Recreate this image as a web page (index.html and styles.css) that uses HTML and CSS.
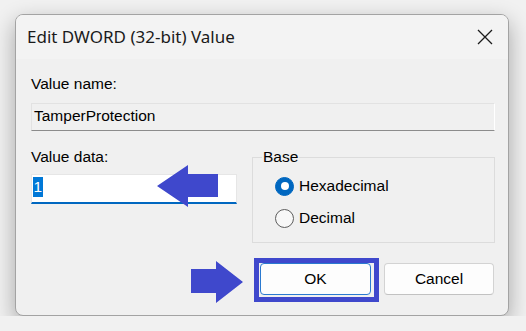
FILE: index.html
```html
<!DOCTYPE html>
<html>
<head>
    <title>Edit DWORD (32-bit) Value</title>
    <link rel="stylesheet" href="styles.css">
</head>
<body>
    <div class="dialog">
        <div class="title-bar">
            <span class="title">Edit DWORD (32-bit) Value</span>
            <span class="close-btn">
                <svg width="16" height="16" viewBox="0 0 16 16">
                    <path d="M1 1 L15 15 M15 1 L1 15" stroke="#1b1b1b" stroke-width="1.3" fill="none"/>
                </svg>
            </span>
        </div>
        <div class="dialog-body">
            <div class="field-label">Value name:</div>
            <div class="name-box">TamperProtection</div>
            <div class="data-row">
                <div class="data-col">
                    <div class="field-label">Value data:</div>
                    <div class="data-box">
                        <span class="selected-text">1</span>
                        <svg class="arrow arrow-left" width="61" height="42" viewBox="0 0 61 42">
                            <polygon points="0,21 31,0 31,9 61,9 61,32 31,32 31,42" fill="#3f48cc"/>
                        </svg>
                    </div>
                </div>
                <fieldset class="base-group">
                    <legend>Base</legend>
                    <div class="radio-row">
                        <span class="radio checked"></span>
                        <span>Hexadecimal</span>
                    </div>
                    <div class="radio-row">
                        <span class="radio"></span>
                        <span>Decimal</span>
                    </div>
                </fieldset>
            </div>
            <div class="button-row">
                <div class="ok-wrap">
                    <svg class="arrow arrow-right" width="52" height="42" viewBox="0 0 52 42">
                        <polygon points="0,8 25,8 25,0 52,21 25,42 25,32 0,32" fill="#3f48cc"/>
                    </svg>
                    <button class="btn btn-ok">OK</button>
                </div>
                <button class="btn">Cancel</button>
            </div>
        </div>
    </div>
</body>
</html>
```

FILE: styles.css
```css
* {
    margin: 0;
    padding: 0;
    box-sizing: border-box;
}
body {
    background: #f1f1f1;
    font-family: 'Liberation Sans', Arial, sans-serif;
    font-size: 15.5px;
    color: #000;
    overflow: hidden;
}
.dialog {
    margin: 14px 0 0 15px;
    width: 494px;
    background: #f0f0f0;
    border: 1px solid #a3a3a3;
    border-radius: 8px;
    box-shadow: 0 8px 22px rgba(0, 0, 0, 0.32);
    overflow: hidden;
}
.title-bar {
    height: 44px;
    background: #f3f3f3;
    display: flex;
    align-items: center;
    justify-content: space-between;
    padding: 0 15px 0 11px;
}
.title {
    font-family: 'Noto Sans', sans-serif;
    font-size: 17px;
    color: #1a1a1a;
    padding-bottom: 1px;
}
.close-btn {
    display: flex;
}
.dialog-body {
    padding: 16px 13px 20px 15px;
}
.field-label {
    line-height: 18px;
}
.name-box {
    margin-top: 10px;
    height: 28px;
    line-height: 18px;
    padding: 3px 2px 5px;
    border-top: 1px solid #e2e2e2;
    border-left: 1px solid #e2e2e2;
    border-right: 1px solid #ffffff;
    border-bottom: 1px solid #8c8c8c;
}
.data-row {
    margin-top: 17px;
    display: grid;
    grid-template-columns: 221px 1fr;
}
.data-col .data-box {
    margin-top: 8px;
}
.data-box {
    position: relative;
    width: 206px;
    height: 30px;
    background: #fff;
    border: 1px solid #e6e6e6;
    border-bottom: 2px solid #0067c0;
    padding: 2px 1px;
}
.selected-text {
    display: inline-block;
    height: 20px;
    line-height: 20px;
    padding: 0 0.5px;
    background: #0078d7;
    color: #fff;
}
.arrow {
    position: absolute;
    display: block;
}
.arrow-left {
    left: 125px;
    top: -10px;
}
.base-group {
    border: 1px solid #dcdcdc;
    padding: 10px 0 14px 0;
    min-width: 0;
}
.base-group legend {
    line-height: 18px;
    margin-left: 9px;
    padding: 0 1px;
}
.radio-row {
    display: flex;
    align-items: center;
    gap: 5px;
    height: 20px;
    margin-left: 22px;
}
.radio-row + .radio-row {
    margin-top: 12px;
}
.radio {
    width: 19px;
    height: 19px;
    border-radius: 50%;
    border: 1px solid #5d5d5d;
    background: #f7f7f7;
    position: relative;
}
.radio.checked {
    border-color: #0067c0;
    background: #0067c0;
}
.radio.checked::after {
    content: '';
    position: absolute;
    left: 4.5px;
    top: 4.5px;
    width: 8px;
    height: 8px;
    border-radius: 50%;
    background: #fff;
}
.button-row {
    margin-top: 20px;
    display: flex;
    justify-content: flex-end;
    gap: 13px;
    padding-right: 1px;
}
.ok-wrap {
    position: relative;
    display: flex;
}
.ok-wrap::after {
    content: '';
    position: absolute;
    top: -5px;
    left: -6px;
    right: -8px;
    bottom: -7px;
    border: 5px solid #3f48cc;
}
.arrow-right {
    left: -69px;
    top: -2px;
}
.btn {
    width: 110px;
    height: 32px;
    background: #fdfdfd;
    border: 1px solid #d3d3d3;
    border-bottom-color: #c2c2c2;
    border-radius: 4px;
    font-family: 'Liberation Sans', Arial, sans-serif;
    font-size: 15.5px;
    color: #000;
}
.btn-ok {
    width: 111px;
    border: 1px solid #2a7ad0;
}
```
